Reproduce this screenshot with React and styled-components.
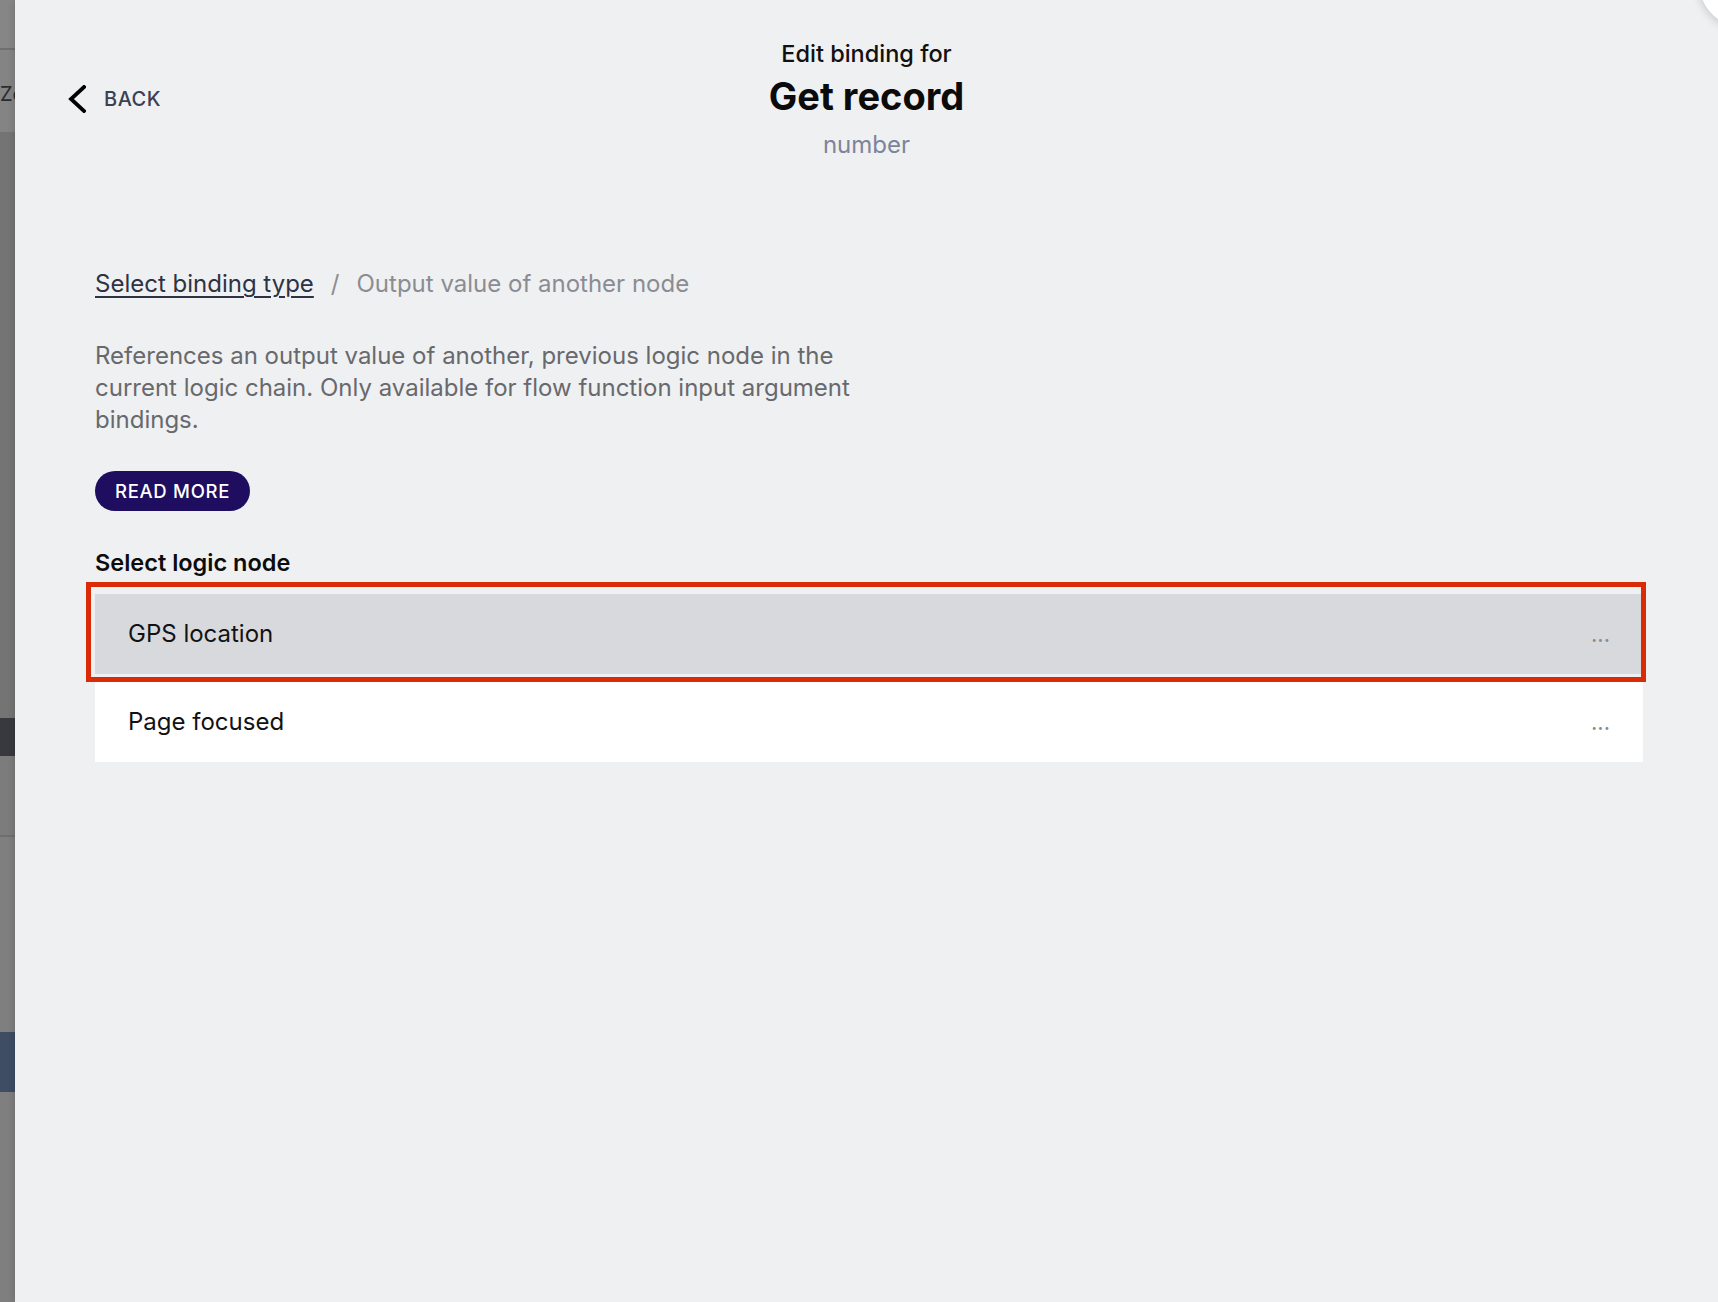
import React from "react";
import styled, { createGlobalStyle } from "styled-components";

const GlobalStyle = createGlobalStyle`
  html, body {
    margin: 0;
    padding: 0;
  }
  body {
    font-family: Inter, Lato, "Open Sans", sans-serif;
    background: #eff0f2;
    -webkit-font-smoothing: antialiased;
  }
  * {
    box-sizing: border-box;
  }
`;

const Screen = styled.div`
  position: relative;
  display: flex;
  width: 1718px;
  height: 1302px;
  overflow: hidden;
`;

// dimmed page behind the drawer
const Backdrop = styled.div`
  flex: none;
  width: 15px;
  display: flex;
  flex-direction: column;
  overflow: hidden;
  background: #7f7f80;
`;
const BackdropBand = styled.div`
  flex: ${(p) => (p.$grow ? 1 : "none")};
  height: ${(p) => p.$h}px;
  background: ${(p) => p.$c};
  border-bottom: ${(p) => (p.$line ? "2px solid #6f6f70" : "none")};
  display: flex;
  align-items: center;
  padding-top: 6px;
  font-size: 20px;
  color: #2a2a2b;
  white-space: nowrap;
  overflow: hidden;
`;

const Panel = styled.main`
  flex: 1;
  display: flex;
  flex-direction: column;
  background: #eff0f2;
  box-shadow: -2px 0 6px rgba(0, 0, 0, 0.12);
`;

const Header = styled.header`
  display: grid;
  grid-template-columns: 1fr auto 1fr;
  align-items: start;
  padding: 39px 53px 0;
`;

const BackButton = styled.button`
  justify-self: start;
  display: flex;
  align-items: center;
  gap: 18px;
  margin-top: 46px;
  padding: 0;
  border: 0;
  background: none;
  font-family: Inter, sans-serif;
  font-size: 20px;
  font-weight: 500;
  letter-spacing: 0.5px;
  color: #3b4052;
  cursor: pointer;
`;

const TitleBlock = styled.div`
  display: flex;
  flex-direction: column;
  align-items: center;
  text-align: center;
`;
const Kicker = styled.div`
  font-size: 23.5px;
  line-height: 30px;
  font-weight: 500;
  color: #111;
`;
const Title = styled.h1`
  margin: 3px 0 0;
  font-size: 38px;
  line-height: 48px;
  font-weight: 700;
  color: #0b0b0c;
`;
const Subtitle = styled.div`
  margin-top: 10px;
  font-size: 24px;
  line-height: 30px;
  color: #7d849a;
`;

const Content = styled.section`
  display: flex;
  flex-direction: column;
  align-items: flex-start;
  padding: 109px 75px 0 80px;
`;

const Breadcrumb = styled.nav`
  display: flex;
  align-items: baseline;
  font-size: 24px;
  line-height: 30px;
  color: #8b8c91;
`;
const CrumbLink = styled.a`
  color: #2e3243;
  text-decoration: underline;
  text-decoration-thickness: 1.5px;
  text-underline-offset: 4px;
  cursor: pointer;
`;
const CrumbSep = styled.span`
  margin: 0 17px;
`;

const Description = styled.p`
  margin: 41px 0 0;
  max-width: 790px;
  font-size: 24px;
  line-height: 32px;
  color: #68696c;
`;

const PillButton = styled.button`
  margin-top: 35px;
  height: 40px;
  padding: 0 20px;
  border: 0;
  border-radius: 20px;
  background: #1f0d5f;
  color: #fff;
  font-family: Inter, sans-serif;
  font-size: 18.5px;
  font-weight: 500;
  letter-spacing: 0.7px;
  cursor: pointer;
`;

const SectionLabel = styled.h2`
  margin: 38px 0 0;
  font-size: 23.5px;
  line-height: 28px;
  font-weight: 600;
  color: #0c0c0d;
`;

const NodeList = styled.ul`
  align-self: stretch;
  display: flex;
  flex-direction: column;
  gap: 8px;
  margin: 17px 0 0;
  padding: 0;
  list-style: none;
`;

const NodeRow = styled.li`
  position: relative;
  display: flex;
  align-items: baseline;
  justify-content: space-between;
  height: 80px;
  padding: 25px 33px 0;
  background: ${(p) => (p.$selected ? "#d8d9dd" : "#ffffff")};
  font-size: 24px;
  color: #121214;
  cursor: pointer;

  /* red annotation frame round the selected row */
  ${(p) =>
    p.$selected &&
    `
    &::after {
      content: "";
      position: absolute;
      top: -12px;
      left: -9px;
      right: -3px;
      bottom: -8px;
      border: 5px solid #db2b06;
      pointer-events: none;
    }
  `}
`;

const MoreDots = styled.span`
  color: #8a8a8f;
  font-size: 22px;
  letter-spacing: 0;
`;

const CloseBubble = styled.div`
  position: absolute;
  top: -64px;
  right: -73px;
  width: 92px;
  height: 92px;
  border-radius: 50%;
  background: #fff;
  box-shadow: 0 2px 10px rgba(0, 0, 0, 0.18);
  &::before {
    content: "";
    position: absolute;
    left: 12px;
    top: 58px;
    width: 12px;
    height: 4px;
    background: #3b4052;
    transform: rotate(35deg);
  }
`;

const nodes = [
  { id: "gps", name: "GPS location", selected: true },
  { id: "focus", name: "Page focused", selected: false },
];

function ChevronLeft() {
  return (
    <svg width="18" height="28" viewBox="0 0 18 28" fill="none">
      <polyline
        points="16,2 3,14 16,26"
        stroke="#000"
        strokeWidth="3.8"
        strokeLinecap="square"
      />
    </svg>
  );
}

export default function App() {
  return (
    <>
      <GlobalStyle />
      <Screen>
        <Backdrop>
          <BackdropBand $h={50} $c="#868687" $line />
          <BackdropBand $h={82} $c="#848485">Zo</BackdropBand>
          <BackdropBand $h={586} $c="#747475" />
          <BackdropBand $h={38} $c="#38393e" />
          <BackdropBand $h={81} $c="#7c7c7d" $line />
          <BackdropBand $h={195} $c="#7f7f80" />
          <BackdropBand $h={60} $c="#3e4c64" />
          <BackdropBand $grow $c="#7f7f80" />
        </Backdrop>

        <Panel>
          <Header>
            <BackButton>
              <ChevronLeft />
              BACK
            </BackButton>
            <TitleBlock>
              <Kicker>Edit binding for</Kicker>
              <Title>Get record</Title>
              <Subtitle>number</Subtitle>
            </TitleBlock>
            <div />
          </Header>

          <Content>
            <Breadcrumb>
              <CrumbLink>Select binding type</CrumbLink>
              <CrumbSep>/</CrumbSep>
              <span>Output value of another node</span>
            </Breadcrumb>

            <Description>
              References an output value of another, previous logic node in the
              current logic chain. Only available for flow function input
              argument bindings.
            </Description>

            <PillButton>READ MORE</PillButton>

            <SectionLabel>Select logic node</SectionLabel>
            <NodeList>
              {nodes.map((n) => (
                <NodeRow key={n.id} $selected={n.selected}>
                  <span>{n.name}</span>
                  <MoreDots>...</MoreDots>
                </NodeRow>
              ))}
            </NodeList>
          </Content>
        </Panel>

        <CloseBubble />
      </Screen>
    </>
  );
}
